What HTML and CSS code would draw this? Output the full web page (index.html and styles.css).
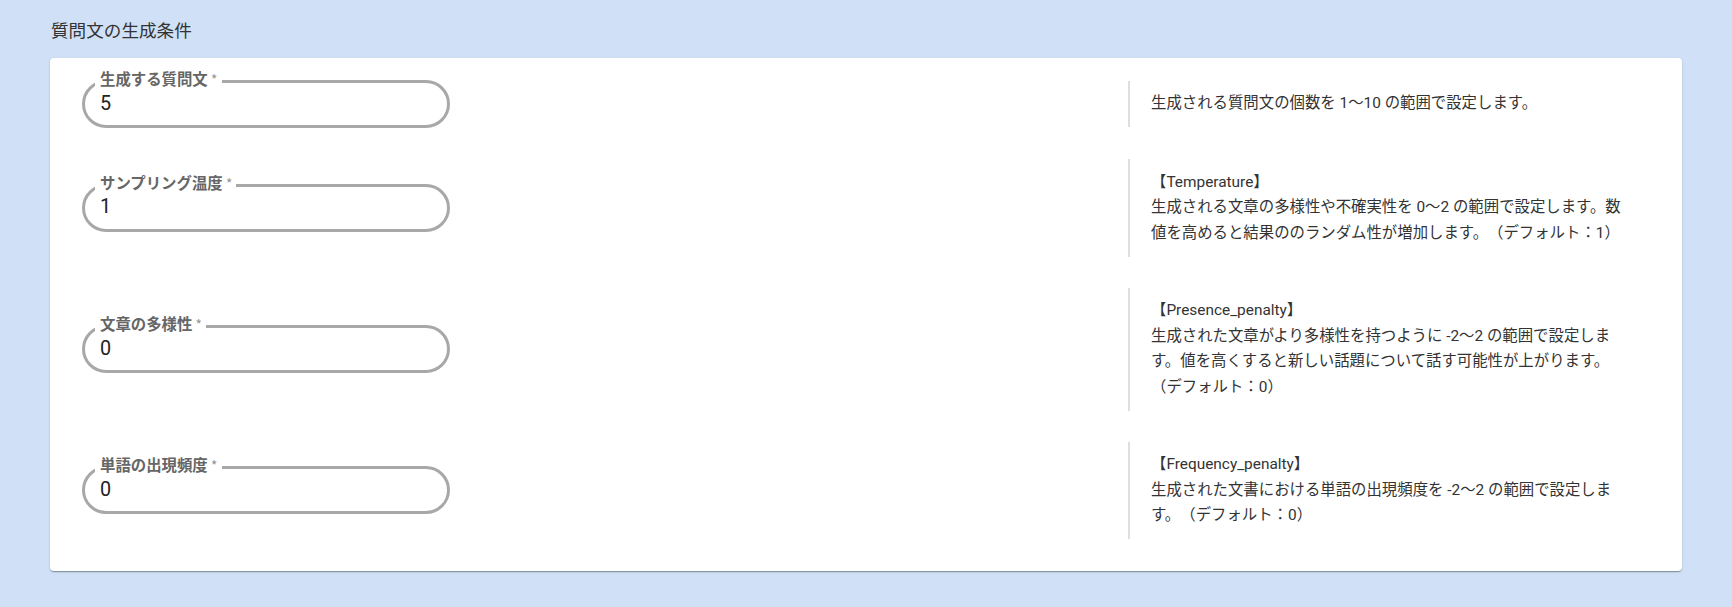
FILE: index.html
```html
<!DOCTYPE html>
<html lang="ja">
<head>
<meta charset="utf-8">
<title>質問文の生成条件</title>
<link rel="stylesheet" href="styles.css">
</head>
<body>
<main class="page">
  <h2 class="section-title">質問文の生成条件</h2>
  <section class="card">
    <div class="row">
      <div class="field">
        <label class="field-label">生成する質問文<span class="req">*</span></label>
        <input class="field-input" type="text" value="5">
      </div>
      <div class="desc">生成される質問文の個数を 1〜10 の範囲で設定します。</div>
    </div>
    <div class="row">
      <div class="field">
        <label class="field-label">サンプリング温度<span class="req">*</span></label>
        <input class="field-input" type="text" value="1">
      </div>
      <div class="desc">【Temperature】<br>生成される文章の多様性や不確実性を 0〜2 の範囲で設定します。数値を高めると結果ののランダム性が増加します。（デフォルト：1）</div>
    </div>
    <div class="row">
      <div class="field">
        <label class="field-label">文章の多様性<span class="req">*</span></label>
        <input class="field-input" type="text" value="0">
      </div>
      <div class="desc">【Presence_penalty】<br>生成された文章がより多様性を持つように -2〜2 の範囲で設定します。値を高くすると新しい話題について話す可能性が上がります。（デフォルト：0）</div>
    </div>
    <div class="row">
      <div class="field">
        <label class="field-label">単語の出現頻度<span class="req">*</span></label>
        <input class="field-input" type="text" value="0">
      </div>
      <div class="desc">【Frequency_penalty】<br>生成された文書における単語の出現頻度を -2〜2 の範囲で設定します。（デフォルト：0）</div>
    </div>
  </section>
</main>
</body>
</html>
```

FILE: styles.css
```css
html, body {
  margin: 0;
  padding: 0;
  background: #d0e1f7;
}

body {
  font-family: Roboto, "Noto Sans CJK JP", sans-serif;
  color: #333;
  text-spacing-trim: space-all;
}

.page {
  padding: 18px 50px 30px 50px;
}

.section-title {
  margin: 0 0 14px 1px;
  font-size: 17.6px;
  font-weight: 400;
  line-height: 26px;
  color: #333;
}

.card {
  background: #fff;
  border-radius: 4px;
  box-shadow: 0 2px 1px -1px rgba(0,0,0,0.2), 0 1px 1px 0 rgba(0,0,0,0.14), 0 1px 3px 0 rgba(0,0,0,0.12);
  padding: 22px 32px 32px 32px;
  display: flex;
  flex-direction: column;
  gap: 31px;
}

.row {
  display: grid;
  grid-template-columns: 1fr 522px;
  align-items: center;
}

.field {
  position: relative;
  width: 368px;
  height: 48px;
  box-sizing: border-box;
  border: 3px solid #a8a8a8;
  border-radius: 24px;
}

.field-label {
  position: absolute;
  left: 10px;
  top: -13px;
  padding: 0 5px;
  background: #fff;
  font-size: 15.4px;
  font-weight: 700;
  line-height: 18px;
  color: #666;
  white-space: nowrap;
}

.req {
  font-size: 11px;
  font-weight: 400;
  color: #888;
  margin-left: 4px;
  vertical-align: 3px;
}

.field-input {
  display: block;
  width: 100%;
  height: 100%;
  box-sizing: border-box;
  border: none;
  outline: none;
  background: transparent;
  padding: 0 15px 2px 15px;
  font-family: Roboto, "Noto Sans CJK JP", sans-serif;
  font-size: 19.8px;
  color: #222;
}

.desc {
  border-left: 2px solid #dedede;
  padding: 10.5px 19px 10.5px 21px;
  font-size: 15.4px;
  line-height: 25.5px;
  color: #333;
  text-spacing-trim: space-all;
}
```
